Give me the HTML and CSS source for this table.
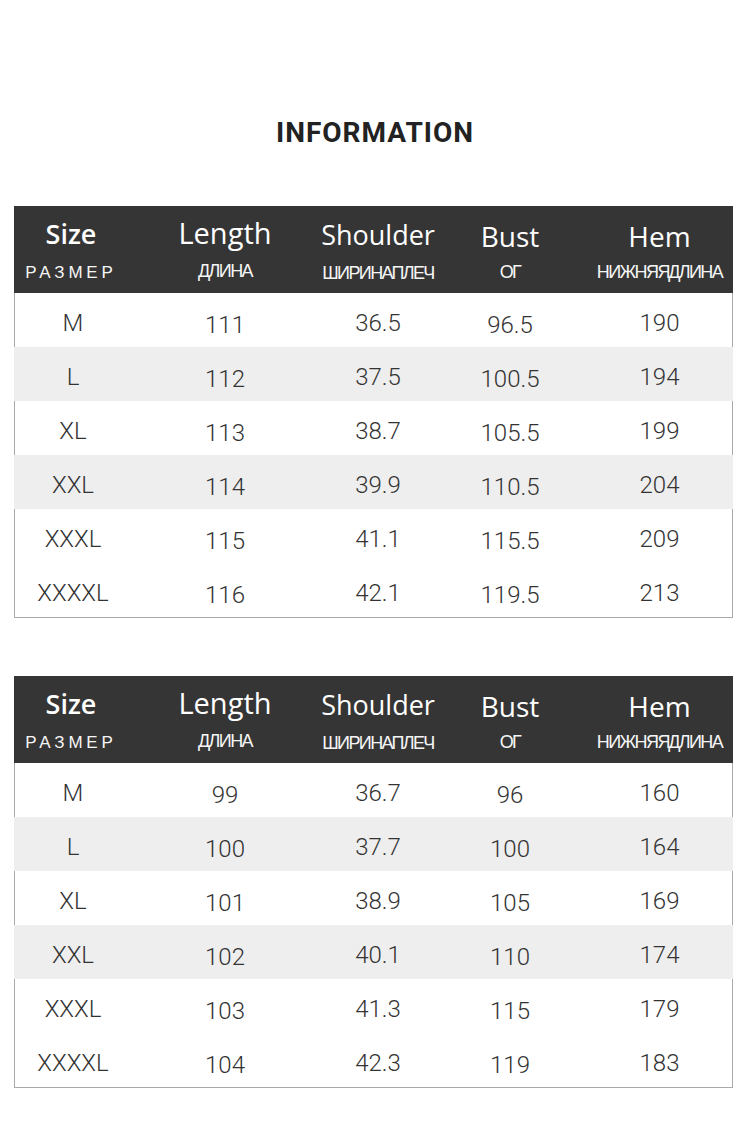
FILE: index.html
```html
<!DOCTYPE html>
<html>
<head>
<meta charset="utf-8">
<link rel="stylesheet" href="styles.css">
</head>
<body>
<div class="page">
  <h1 class="title">INFORMATION</h1>

  <div class="table">
    <div class="head">
      <div class="hc"><div class="en size">Size</div><div class="ru wide">РАЗМЕР</div></div>
      <div class="hc"><div class="en length">Length</div><div class="ru">ДЛИНА</div></div>
      <div class="hc"><div class="en mid">Shoulder</div><div class="ru">ШИРИНА ПЛЕЧ</div></div>
      <div class="hc"><div class="en mid low">Bust</div><div class="ru">ОГ</div></div>
      <div class="hc"><div class="en mid low">Hem</div><div class="ru">НИЖНЯЯ ДЛИНА</div></div>
    </div>
    <div class="body">
      <div class="row"><span>M</span><span class="lo">111</span><span>36.5</span><span class="lo">96.5</span><span>190</span></div>
      <div class="row alt"><span>L</span><span class="lo">112</span><span>37.5</span><span class="lo">100.5</span><span>194</span></div>
      <div class="row"><span>XL</span><span class="lo">113</span><span>38.7</span><span class="lo">105.5</span><span>199</span></div>
      <div class="row alt"><span>XXL</span><span class="lo">114</span><span>39.9</span><span class="lo">110.5</span><span>204</span></div>
      <div class="row"><span>XXXL</span><span class="lo">115</span><span>41.1</span><span class="lo">115.5</span><span>209</span></div>
      <div class="row"><span>XXXXL</span><span class="lo">116</span><span>42.1</span><span class="lo">119.5</span><span>213</span></div>
    </div>
  </div>

  <div class="table second">
    <div class="head">
      <div class="hc"><div class="en size">Size</div><div class="ru wide">РАЗМЕР</div></div>
      <div class="hc"><div class="en length">Length</div><div class="ru">ДЛИНА</div></div>
      <div class="hc"><div class="en mid">Shoulder</div><div class="ru">ШИРИНА ПЛЕЧ</div></div>
      <div class="hc"><div class="en mid low">Bust</div><div class="ru">ОГ</div></div>
      <div class="hc"><div class="en mid low">Hem</div><div class="ru">НИЖНЯЯ ДЛИНА</div></div>
    </div>
    <div class="body">
      <div class="row"><span>M</span><span class="lo">99</span><span>36.7</span><span class="lo">96</span><span>160</span></div>
      <div class="row alt"><span>L</span><span class="lo">100</span><span>37.7</span><span class="lo">100</span><span>164</span></div>
      <div class="row"><span>XL</span><span class="lo">101</span><span>38.9</span><span class="lo">105</span><span>169</span></div>
      <div class="row alt"><span>XXL</span><span class="lo">102</span><span>40.1</span><span class="lo">110</span><span>174</span></div>
      <div class="row"><span>XXXL</span><span class="lo">103</span><span>41.3</span><span class="lo">115</span><span>179</span></div>
      <div class="row"><span>XXXXL</span><span class="lo">104</span><span>42.3</span><span class="lo">119</span><span>183</span></div>
    </div>
  </div>
</div>
</body>
</html>
```
FILE: styles.css
```css
html, body {
  margin: 0;
  padding: 0;
  background: #ffffff;
}
.page {
  width: 750px;
  padding-top: 117px;
  box-sizing: border-box;
}
.title {
  margin: 0;
  text-align: center;
  font-family: Roboto, "Liberation Sans", sans-serif;
  font-weight: 700;
  font-size: 28px;
  line-height: 32px;
  letter-spacing: 1px;
  color: #222222;
}
.table {
  margin: 57px 17px 0 14px;
  width: 719px;
}
.table.second {
  margin-top: 58px;
}
.head,
.row {
  display: grid;
  grid-template-columns: 114px 194px 112px 152px 147px;
}
.head {
  height: 87px;
  background: #353535;
  color: #ffffff;
}
.hc {
  display: flex;
  flex-direction: column;
  align-items: center;
  white-space: nowrap;
}
.en {
  font-family: "Open Sans", "Noto Sans", sans-serif;
  font-size: 27px;
  line-height: 30px;
  height: 30px;
  margin-top: 14px;
  font-weight: 400;
}
.en.size {
  font-weight: 600;
  font-size: 27px;
  margin-top: 13px;
}
.en.length {
  font-size: 29px;
  margin-top: 12px;
}
.en.mid {
  font-size: 27px;
  font-weight: 500;
  margin-top: 14px;
}
.en.mid.low {
  font-size: 28px;
  margin-top: 15px;
}
.ru {
  font-family: "Liberation Sans", Arial, sans-serif;
  font-size: 18px;
  line-height: 20px;
  margin-top: 13px;
  letter-spacing: -1.6px;
  word-spacing: -4px;
  color: #f5f5f5;
}
.en.mid.low + .ru {
  margin-top: 11px;
}
.en.size + .ru {
  margin-top: 14px;
}
.ru.wide {
  letter-spacing: 3.8px;
  font-size: 17px;
}
.body {
  border: 1px solid #aaaaaa;
  border-top: none;
}
.row {
  height: 54px;
  margin-left: -1px;
  margin-right: -1px;
  align-items: center;
  font-family: Roboto, "Liberation Sans", sans-serif;
  font-weight: 300;
  font-size: 24px;
  color: #333333;
}
.row.alt {
  background: #eeeeee;
}
.row span {
  text-align: center;
  white-space: nowrap;
  line-height: 28px;
  padding-top: 6px;
}
.row span:first-child {
  padding-left: 4px;
}
.row span.lo {
  padding-top: 9px;
}
```
